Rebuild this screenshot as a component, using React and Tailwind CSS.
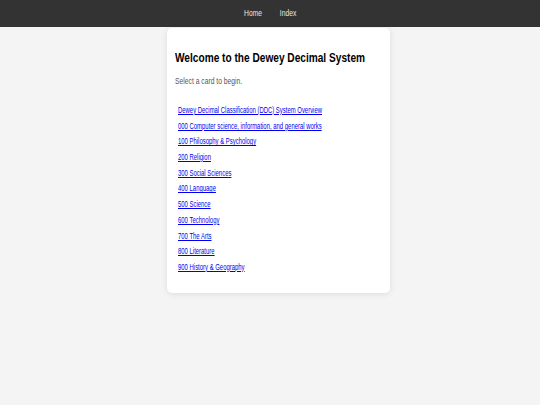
import React from "react";

const links = [
  "Dewey Decimal Classification (DDC) System Overview",
  "000 Computer science, information, and general works",
  "100 Philosophy & Psychology",
  "200 Religion",
  "300 Social Sciences",
  "400 Language",
  "500 Science",
  "600 Technology",
  "700 The Arts",
  "800 Literature",
  "900 History & Geography",
];

export default function App() {
  return (
    <div
      className="min-h-[405px] w-full bg-[#f4f4f4]"
      style={{ fontFamily: '"Liberation Sans", Arial, sans-serif' }}
    >
      <nav className="flex h-[27px] items-center justify-center gap-[12px] bg-[#333333]">
        <a href="#" className="inline-block origin-center scale-x-75 text-[9px] leading-[11px] text-[#e6e6e6] no-underline">
          Home
        </a>
        <a href="#" className="inline-block origin-center scale-x-75 text-[9px] leading-[11px] text-[#e6e6e6] no-underline">
          Index
        </a>
      </nav>
      <div className="flex justify-center pl-[16px]">
        <main className="mt-px w-[223px] rounded-[5px] bg-white pb-[17px] pt-[22px] shadow-[0_1px_6px_rgba(0,0,0,0.10)]">
          <h1 className="pl-[8px] text-[13.5px] font-bold leading-[16px] text-black">
            <span className="inline-block origin-left scale-x-75 whitespace-nowrap">
              Welcome to the Dewey Decimal System
            </span>
          </h1>
          <p className="mt-[10px] pl-[8px] text-[9px] leading-[11px] text-[#555555]">
            <span className="inline-block origin-left scale-x-75 whitespace-nowrap">
              Select a card to begin.
            </span>
          </p>
          <ul className="mt-[16px] flex flex-col pl-[11px]">
            {links.map((l) => (
              <li key={l} className="h-[15.7px] text-[8.6px] leading-[15.7px]">
                <a
                  href="#"
                  className="inline-block origin-left scale-x-[0.69] whitespace-nowrap text-[#0000ee] underline"
                >
                  {l}
                </a>
              </li>
            ))}
          </ul>
        </main>
      </div>
    </div>
  );
}
